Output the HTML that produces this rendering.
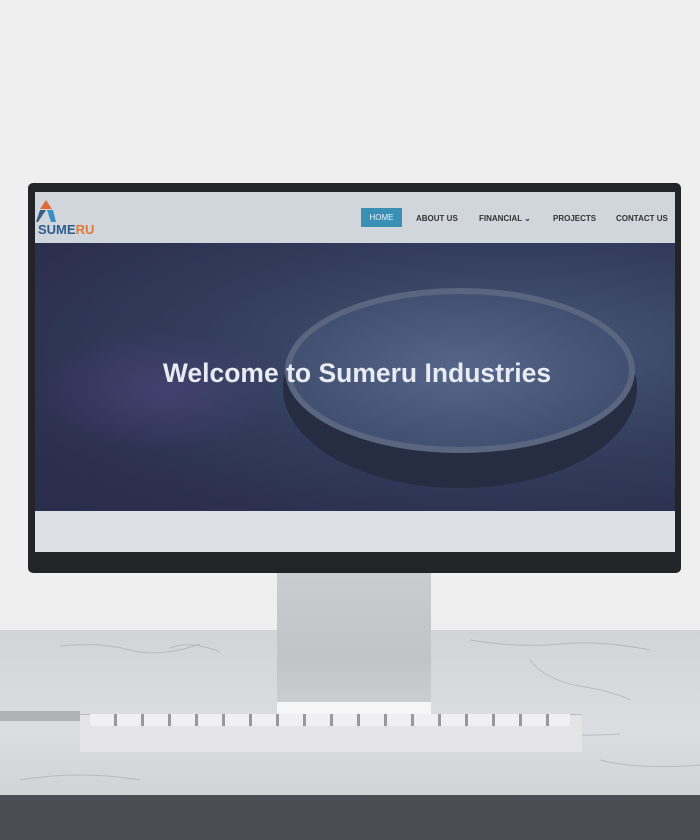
<!DOCTYPE html>
<html><head><style>
*{margin:0;padding:0;box-sizing:border-box}
body{width:700px;height:840px;position:relative;overflow:hidden;background:#efefef;font-family:"Liberation Sans",sans-serif}
.a{position:absolute}
</style></head><body>
<div class="a" style="left:0;top:630px;width:700px;height:165px;background:linear-gradient(#d3d4d8,#dcdde0 60%,#d2d3d6)"></div>
<svg class="a" style="left:0;top:630px" width="700" height="165"><g stroke="#8a90a0" stroke-width="1" fill="none" opacity=".4">
<path d="M60 16 Q100 12 130 20 T200 14"/><path d="M170 18 Q190 10 220 22"/><path d="M470 10 Q520 18 560 14 T650 20"/><path d="M530 30 Q545 50 580 56 T630 70"/><path d="M500 100 Q550 108 620 104"/><path d="M20 150 Q80 140 140 150"/><path d="M600 130 Q640 140 700 135"/></g></svg>
<div class="a" style="left:0;top:795px;width:700px;height:45px;background:#4b4d53"></div>
<div class="a" style="left:0;top:711px;width:80px;height:10px;background:#b0b2b6"></div>
<div class="a" style="left:277px;top:573px;width:154px;height:142px;background:linear-gradient(#cbccd0,#c2c3c7 60%,#cfd0d3)"></div>
<div class="a" style="left:277px;top:702px;width:154px;height:13px;background:#f6f6f6"></div>
<div class="a" style="left:80px;top:714px;width:502px;height:38px;background:#e4e4e6;border-top:1px solid #bbb"></div>
<div class="a" style="left:90px;top:714px;width:480px;height:12px;background:repeating-linear-gradient(90deg,#f0f0f2 0 24px,#999 24px 27px)"></div>
<div class="a" style="left:28px;top:183px;width:653px;height:390px;background:#232427;border-radius:5px"></div>
<div class="a" style="left:35px;top:192px;width:640px;height:360px;background:#dde1e6"></div>
<div class="a" style="left:35px;top:192px;width:640px;height:51px;background:#d1d6dd"></div>
<svg class="a" style="left:36px;top:200px" width="20" height="24"><polygon points="10,0 16,9 4,9" fill="#e06b35"/><polygon points="4,10 10,10 2,22 0,22" fill="#3b5e82"/><polygon points="11,10 17,10 20,22 15,22" fill="#3b8ec0"/></svg>
<div class="a" style="left:38px;top:222px;font-size:13px;color:#2d5c8c;font-weight:bold">SUME<span style="color:#e07a35">RU</span></div>
<div class="a" style="left:361px;top:208px;width:41px;height:19px;background:#3a8fb5;color:#e8f2f8;font-size:8px;line-height:19px;text-align:center">HOME</div>
<div class="a" style="left:416px;top:214px;font-size:8px;color:#333;font-weight:bold">ABOUT US</div>
<div class="a" style="left:479px;top:214px;font-size:8px;color:#333;font-weight:bold">FINANCIAL ⌄</div>
<div class="a" style="left:553px;top:214px;font-size:8px;color:#333;font-weight:bold">PROJECTS</div>
<div class="a" style="left:616px;top:214px;font-size:8px;color:#333;font-weight:bold">CONTACT US</div>
<div class="a" style="left:35px;top:243px;width:640px;height:268px;background:radial-gradient(ellipse at 75% 40%,#4a5877,#333d5d 45%,#2c2f50 80%,#2a2d4c)"></div>
<div class="a" style="left:35px;top:330px;width:250px;height:120px;background:radial-gradient(ellipse,rgba(100,80,150,.35),transparent 70%)"></div>
<div class="a" style="left:283px;top:288px;width:354px;height:200px;border-radius:50%;background:#262d42"></div>
<div class="a" style="left:285px;top:288px;width:350px;height:165px;border-radius:50%;border:6px solid #5a6680;background:radial-gradient(#56668a,#3a4666)"></div>
<div class="a" style="left:35px;top:358px;width:640px;text-align:center;font-size:26.5px;color:#e8ebf2;font-weight:bold;padding-left:4px">Welcome to Sumeru Industries</div>
</body></html>
